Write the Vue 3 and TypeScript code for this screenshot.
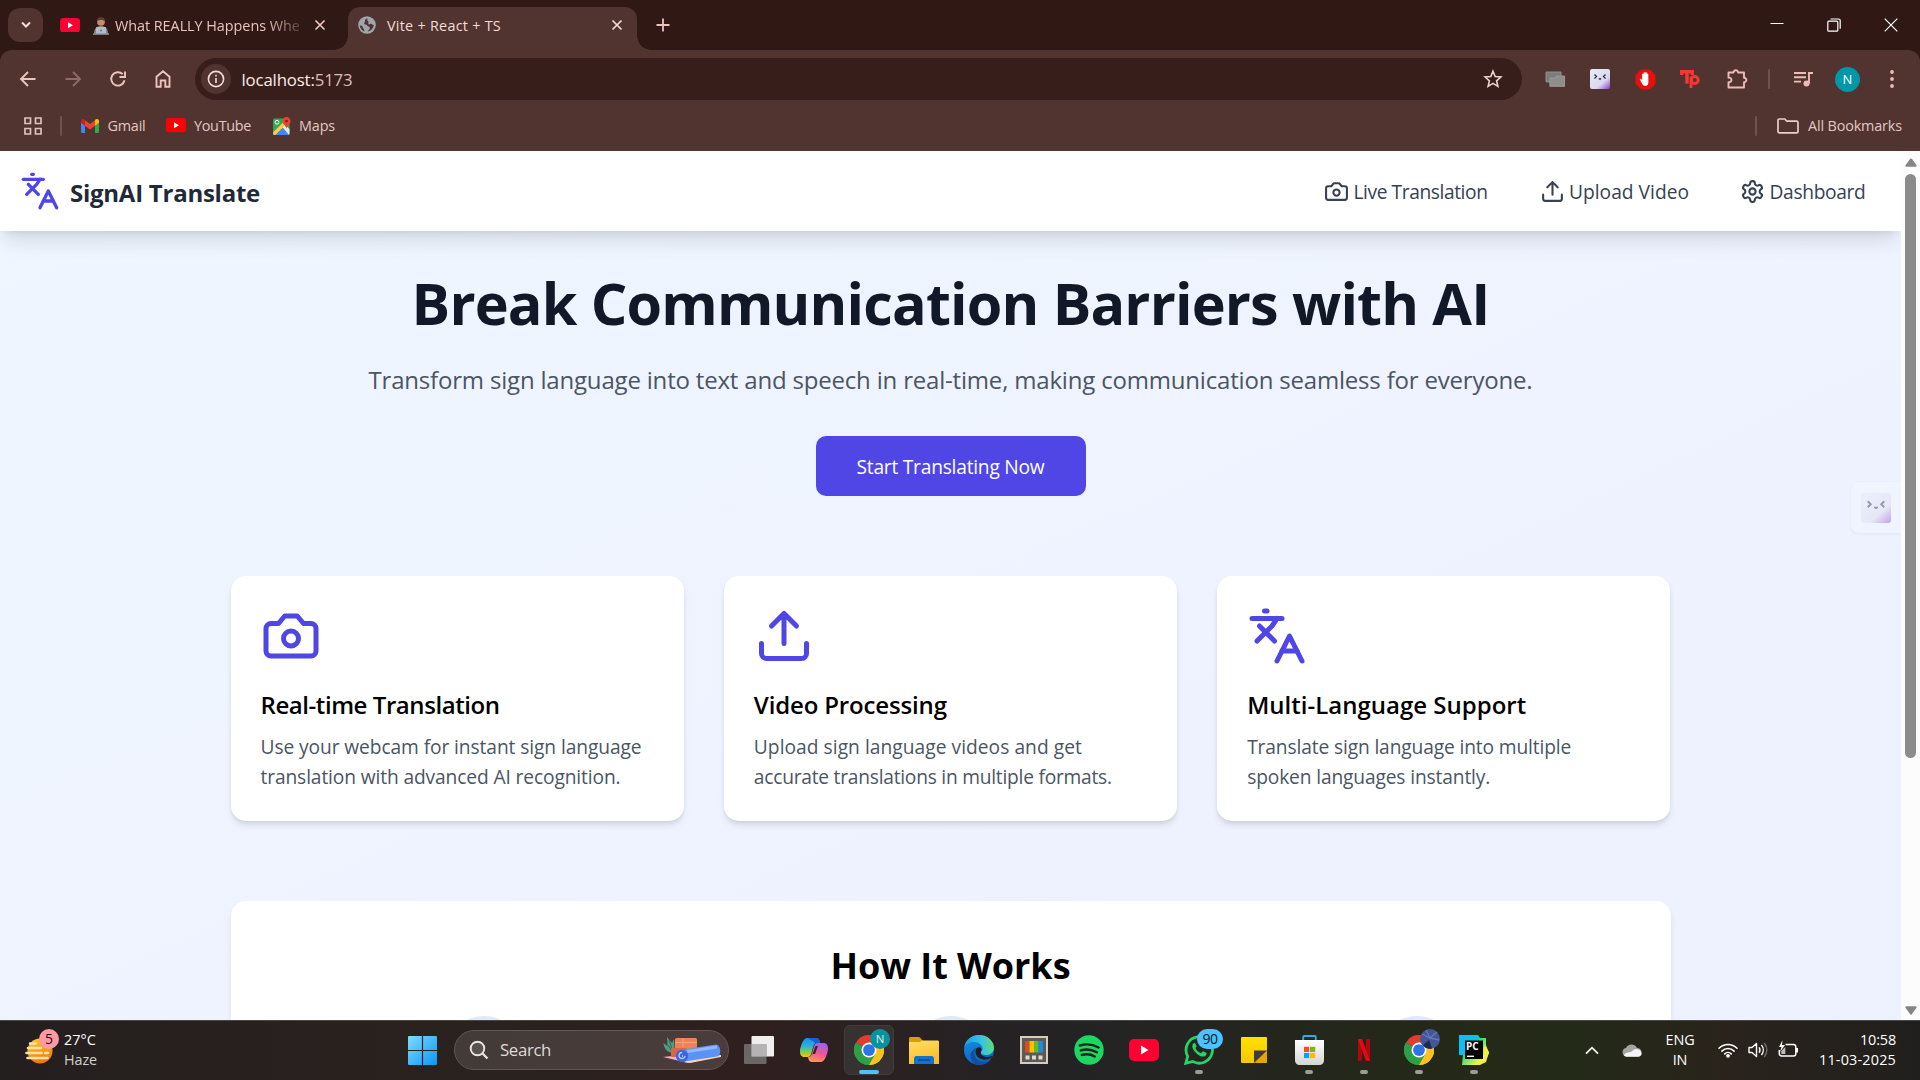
<script setup lang="ts">
interface NavLink { label: string; icon: string; cls: string }
interface Line { text: string; ls: number }
interface Feature { title: Line; icon: string; lines: Line[] }

const navLinks: NavLink[] = [
  { label: 'Live Translation', icon: '#i-camera', cls: 'nav-live' },
  { label: 'Upload Video', icon: '#i-upload', cls: 'nav-upload' },
  { label: 'Dashboard', icon: '#i-gear', cls: 'nav-dash' },
]

const features: Feature[] = [
  {
    title: { text: 'Real-time Translation', ls: -0.434 },
    icon: '#i-camera',
    lines: [
      { text: 'Use your webcam for instant sign language', ls: -0.092 },
      { text: 'translation with advanced AI recognition.', ls: -0.123 },
    ],
  },
  {
    title: { text: 'Video Processing', ls: -0.151 },
    icon: '#i-upload',
    lines: [
      { text: 'Upload sign language videos and get', ls: 0.036 },
      { text: 'accurate translations in multiple formats.', ls: -0.24 },
    ],
  },
  {
    title: { text: 'Multi-Language Support', ls: 0.008 },
    icon: '#i-lang',
    lines: [
      { text: 'Translate sign language into multiple', ls: -0.133 },
      { text: 'spoken languages instantly.', ls: -0.142 },
    ],
  },
]
</script>

<template>
  <div class="screen">
    <svg class="defs" width="0" height="0" aria-hidden="true">
      <defs>
        <linearGradient id="gWin" x1="0" y1="0" x2="1" y2="1"><stop offset="0" stop-color="#7fdcff" /><stop offset="1" stop-color="#0a95f5" /></linearGradient>
        <linearGradient id="gFace" x1="0.2" y1="0.1" x2="1" y2="1"><stop offset="0" stop-color="#e4e8f4" /><stop offset="0.6" stop-color="#dcd8ef" /><stop offset="1" stop-color="#8a3fd0" /></linearGradient>
        <linearGradient id="gSun" x1="0" y1="0" x2="0.3" y2="1"><stop offset="0" stop-color="#ffd21c" /><stop offset="1" stop-color="#f07a10" /></linearGradient>
        <linearGradient id="gCopA" x1="0" y1="0" x2="0" y2="1"><stop offset="0" stop-color="#1c8bf0" /><stop offset="0.45" stop-color="#2bb5d6" /><stop offset="0.7" stop-color="#7ccb4a" /><stop offset="1" stop-color="#f5c518" /></linearGradient>
        <linearGradient id="gCopB" x1="0.6" y1="0" x2="0.3" y2="1"><stop offset="0" stop-color="#a35cf0" /><stop offset="0.5" stop-color="#f0549a" /><stop offset="1" stop-color="#ff9a4a" /></linearGradient>
        <linearGradient id="gFolder" x1="0" y1="0" x2="0.4" y2="1"><stop offset="0" stop-color="#ffdf6b" /><stop offset="1" stop-color="#fbbf24" /></linearGradient>
        <linearGradient id="gEdge" x1="0" y1="0.4" x2="1" y2="0.3"><stop offset="0" stop-color="#1a9ce0" /><stop offset="0.55" stop-color="#35c1e8" /><stop offset="1" stop-color="#5fe070" /></linearGradient>
        <linearGradient id="gEdge2" x1="0" y1="0" x2="0.4" y2="1"><stop offset="0" stop-color="#1b93e6" /><stop offset="1" stop-color="#0a62c0" /></linearGradient>
        <linearGradient id="gPc" x1="0" y1="0" x2="1" y2="1"><stop offset="0" stop-color="#07c3f2" /><stop offset="0.4" stop-color="#21d789" /><stop offset="0.8" stop-color="#fcf84a" /></linearGradient>
        <linearGradient id="gBag" x1="0" y1="0" x2="0" y2="1"><stop offset="0" stop-color="#ffffff" /><stop offset="1" stop-color="#d5d5d5" /></linearGradient>
        <linearGradient id="gNote" x1="0" y1="0" x2="0" y2="1"><stop offset="0" stop-color="#ffe000" /><stop offset="1" stop-color="#f5c800" /></linearGradient>
      </defs>
      <symbol id="i-camera" viewBox="0 0 24 24"><path d="M14.5 4h-5L7 7H4a2 2 0 0 0-2 2v9a2 2 0 0 0 2 2h16a2 2 0 0 0 2-2V9a2 2 0 0 0-2-2h-3l-2.500-3z" /><circle cx="12" cy="13" r="3" /></symbol>
      <symbol id="i-upload" viewBox="0 0 24 24"><path d="M21 15v4a2 2 0 0 1-2 2H5a2 2 0 0 1-2-2v-4" /><path d="m17 8-5-5-5 5M12 3v12" /></symbol>
      <symbol id="i-lang" viewBox="0 0 24 24"><path d="m5 8 6 6" /><path d="m4 14 6-6 2-3" /><path d="M2 5h12" /><path d="M7 2h1" /><path d="m22 22-5-10-5 10" /><path d="M14 18h6" /></symbol>
      <symbol id="i-gear" viewBox="0 0 24 24"><path d="M12.220 2h-.44a2 2 0 0 0-2 2v.18a2 2 0 0 1-1 1.730l-.43.25a2 2 0 0 1-2 0l-.15-.08a2 2 0 0 0-2.730.73l-.22.38a2 2 0 0 0 .73 2.730l.15.1a2 2 0 0 1 1 1.720v.51a2 2 0 0 1-1 1.740l-.15.09a2 2 0 0 0-.73 2.730l.22.38a2 2 0 0 0 2.730.73l.15-.08a2 2 0 0 1 2 0l.43.25a2 2 0 0 1 1 1.730V20a2 2 0 0 0 2 2h.44a2 2 0 0 0 2-2v-.18a2 2 0 0 1 1-1.730l.43-.25a2 2 0 0 1 2 0l.15.08a2 2 0 0 0 2.730-.73l.22-.39a2 2 0 0 0-.73-2.730l-.15-.08a2 2 0 0 1-1-1.740v-.5a2 2 0 0 1 1-1.740l.15-.09a2 2 0 0 0 .73-2.730l-.22-.38a2 2 0 0 0-2.730-.73l-.15.08a2 2 0 0 1-2 0l-.43-.25a2 2 0 0 1-1-1.730V4a2 2 0 0 0-2-2z" /><circle cx="12" cy="12" r="3" /></symbol>
      <symbol id="i-x" viewBox="0 0 12 12"><path d="M1.500 1.500l9 9M10.500 1.500l-9 9" fill="none" stroke="currentColor" stroke-width="1.700" /></symbol>
      <symbol id="i-yt" viewBox="0 0 30 22"><rect width="30" height="22" rx="5" fill="currentColor" /><path d="M12 6.500v9l7.500-4.500z" fill="#fff" /></symbol>
      <symbol id="i-chrome" viewBox="0 0 48 48">
        <path d="M24 24 3.200 12A24 24 0 0 1 44.800 12z" fill="#e33b2e" />
        <path d="M24 24 44.800 12A24 24 0 0 1 24 48z" fill="#fcc31e" />
        <path d="M24 24v24A24 24 0 0 1 3.200 12z" fill="#2c9f47" />
        <path d="M24 12h20.800A24 24 0 0 1 24 48l10.400-18z" fill="#fcc31e" />
        <path d="M13.600 30 3.200 12A24 24 0 0 0 24 48l10.400-18z" fill="#2c9f47" />
        <circle cx="24" cy="24" r="12" fill="#fff" /><circle cx="24" cy="24" r="9.400" fill="#2f73e8" />
      </symbol>
      <symbol id="i-face" viewBox="0 0 20 20"><rect width="20" height="20" rx="2" fill="url(#gFace)" /><path d="M4.500 5.500 6.500 7.500 4.500 9.500M15.500 5.500 13.500 7.500 15.500 9.500" fill="none" stroke="#20283a" stroke-width="1.200" /><path d="M8.600 9.200h2.800c0 2-2.800 2-2.800 0z" fill="#20283a" /></symbol>
    </svg>

    <!-- Tab strip -->
    <div class="tabs">
      <div class="tab-search"><svg width="10" height="8" viewBox="0 0 10 8"><path d="M1 1.500l4 4 4-4" fill="none" stroke="#f3dcd8" stroke-width="2" /></svg></div>
      <div class="tab tab-idle">
        <svg class="yt" width="20" height="14.500" style="color: #ff0033"><use href="#i-yt" /></svg>
        <svg class="person" width="16" height="19" viewBox="0 0 16 19">
          <path d="M1 18c0-6 3-8 7-8s7 2 7 8z" fill="#7d8791" /><circle cx="8" cy="5.800" r="3.900" fill="#c68c6c" /><path d="M4 5.500C3.500-.5 12.500-.5 12 5.500 11 3.500 5 3.500 4 5.500z" fill="#54413c" /><rect x="3" y="11" width="10" height="7" rx="1" fill="#b4bbc3" /><circle cx="8" cy="14.500" r="1" fill="#68717b" /><rect x="0" y="17.300" width="16" height="1.500" fill="#8d959d" />
        </svg>
        <span class="tab-title idle-title">What REALLY Happens Whe</span>
        <svg class="tab-x" width="12" height="12"><use href="#i-x" /></svg>
      </div>
      <div class="tab tab-active">
        <svg class="globe" width="18" height="18" viewBox="0 0 18 18"><circle cx="9" cy="9" r="8.800" fill="#a0a5ab" /><path d="M9.500 2.500c-2 .2-2.800 1.500-2.400 2.800.4 1-1.200 1-1 2.200.2 1.300 2.400.8 3 2 .6 1.300 2.300.4 2.700 2 .3 1.300-1 2.500-2.300 4.200 3.500-.8 6-3.400 6.300-6.700-1.500.3-1.600-1.200-3-1.200-1.300-.2-.7 1-2 .6-1.400-.5.2-1.600-.3-2.600-.4-1-1.600-.6-1-3.300zM1.800 9.500c.2 2.700 2 5 4.600 5.900C6.800 13 5 12.800 4.600 11 4 9.400 3 9.700 1.800 9.500z" fill="#51332f" /></svg>
        <span class="tab-title active-title">Vite + React + TS</span>
        <svg class="tab-x" width="12" height="12"><use href="#i-x" /></svg>
      </div>
      <svg class="plus" width="14" height="14" viewBox="0 0 14 14"><path d="M7 .5v13M.5 7h13" stroke="#ecc4bd" stroke-width="1.800" /></svg>
      <div class="win-ctl">
        <svg width="14" height="14" viewBox="0 0 14 14"><path d="M.5 5.500h13" stroke="#fff" /></svg>
        <svg width="14" height="14" viewBox="0 0 14 14"><rect x=".8" y="3.200" width="10" height="10" rx="1" fill="none" stroke="#fff" stroke-width="1.200" /><path d="M3.500 1h8a1.700 1.700 0 0 1 1.700 1.700v8" fill="none" stroke="#fff" stroke-width="1.200" /></svg>
        <svg width="14" height="14" viewBox="0 0 14 14"><path d="M.7.7l12.600 12.600M13.300.7.7 13.300" stroke="#fff" stroke-width="1.200" /></svg>
      </div>
    </div>

    <!-- Toolbar and bookmarks -->
    <div class="chrome-body">
      <div class="toolbar">
        <div class="nav-btns">
          <svg width="20" height="20" viewBox="0 0 20 20"><path d="M17.500 10H3.500M10 3 3 10l7 7" /></svg>
          <svg class="dim" width="20" height="20" viewBox="0 0 20 20"><path d="M2.500 10h14M10 3l7 7-7 7" /></svg>
          <svg width="20" height="20" viewBox="0 0 20 20"><path d="M16.500 11.200a6.700 6.700 0 1 1-1.800-6M17 2.500V8h-5.500" /></svg>
          <svg width="20" height="20" viewBox="0 0 20 20"><path d="M3.500 17.700V7.800L10 2.300l6.500 5.500v9.900h-4.200V11.500H7.700v6.200z" /></svg>
        </div>
        <div class="omnibox">
          <div class="site-info"><svg width="18" height="18" viewBox="0 0 18 18"><circle cx="9" cy="9" r="7.600" fill="none" stroke="#f0dcd8" stroke-width="1.600" /><path d="M9 8v5M9 4.800v1.700" stroke="#f0dcd8" stroke-width="1.600" /></svg></div>
          <span class="url">localhost:<span class="port">5173</span></span>
          <svg class="star" width="20" height="20" viewBox="0 0 20 20"><path d="M10 2.200l2.200 5.300 5.700.5-4.300 3.800 1.300 5.600L10 14.400l-4.900 3 1.300-5.600L2.100 8l5.700-.5z" fill="none" stroke="#ecd2cd" stroke-width="1.600" /></svg>
        </div>
        <div class="exts">
          <svg width="20" height="20" viewBox="0 0 20 20"><path d="M1 3h15v4h4v11H4.500v-4.500H1z" fill="#7f7b78" /><path d="M1 3h15v9.500H1z" fill="#7c7c7a" stroke="#8f8f8d" /><path d="M5 9h5l1.500-2H19.500v10H5z" fill="#8e8d8b" stroke="#9b9997" /></svg>
          <svg class="e-face" width="20" height="20"><use href="#i-face" /></svg>
          <svg class="e-stop" width="21" height="21" viewBox="0 0 21 21"><path d="M6.200.5h8.600l5.700 5.700v8.600l-5.700 5.700H6.200L.5 14.800V6.200z" fill="#e80f0f" /><path d="M6.500 13.500 4.900 10.800c-.4-.9.7-1.500 1.300-.8l.9 1.200V5.500c0-1.200 1.500-1.200 1.500 0v4-5.300c0-1.200 1.600-1.200 1.600 0v5-5.400c0-1.200 1.600-1.200 1.600 0v5.700-4.200c0-1.100 1.500-1.100 1.500 0l.1 8c-.2 5-5 5-6.900.2z" fill="#fff" /></svg>
          <svg class="e-tp" width="20" height="20" viewBox="0 0 20 20"><path d="M1.700 6V2.800h10.500V6M7 2.800v12" fill="none" stroke="#fb3434" stroke-width="3.400" /><circle cx="14.700" cy="11" r="3.500" fill="none" stroke="#fb3434" stroke-width="3" /><path d="M11 7.500v11.500" stroke="#fb3434" stroke-width="2.800" /></svg>
          <svg class="e-puz" width="22" height="22" viewBox="0 0 22 22"><path d="M2.500 4.500h5a2.300 2.300 0 1 1 4.600 0H18v5.200a2.300 2.300 0 1 1 0 4.600v5.200H2.500v-5.400a2.300 2.300 0 1 0 0-4.400z" fill="none" stroke="#ecbdb5" stroke-width="1.900" stroke-linejoin="round" /></svg>
          <i class="bar e-bar" />
          <svg class="e-mus" width="20" height="18" viewBox="0 0 20 18"><path d="M1 3h12M1 7.300h12M1 11.600h7M16 13.500V3h4" fill="none" stroke="#ecbdb5" stroke-width="1.900" /><circle cx="13.500" cy="13.600" r="3" fill="#ecbdb5" /></svg>
          <div class="avatar">N</div>
          <svg class="e-dots" width="4" height="18" viewBox="0 0 4 18"><circle cx="2" cy="2" r="1.900" fill="#ecbdb5" /><circle cx="2" cy="9" r="1.900" fill="#ecbdb5" /><circle cx="2" cy="16" r="1.900" fill="#ecbdb5" /></svg>
        </div>
      </div>
      <div class="bookmarks">
        <svg class="apps" width="18" height="18" viewBox="0 0 18 18"><path d="M1 1h5.500v5.500H1zM11.500 1H17v5.500h-5.500zM1 11.500h5.500V17H1zM11.500 11.500H17V17h-5.500z" fill="none" stroke="#ddc3bf" stroke-width="1.700" /></svg>
        <i class="bar" />
        <svg class="gm" width="18" height="14" viewBox="0 0 18 14"><path d="M0 2v10.800c0 .6.500 1.200 1.200 1.200H4V6.500z" fill="#4285f4" /><path d="M18 2v10.800c0 .6-.5 1.200-1.200 1.200H14V6.500z" fill="#34a853" /><path d="M14 1.300v5.400l4-3V2c0-2-2.200-2.600-3.600-1.500z" fill="#fbbc04" /><path d="M4 6.700V1.300l5 3.800 5-3.800v5.400l-5 3.800z" fill="#ea4335" /><path d="M0 2v1.700l4 3V1.300L3.600.5C2.200-.6 0 0 0 2z" fill="#c5221f" /></svg>
        <span class="bm bm-gmail">Gmail</span>
        <svg class="yt" width="20" height="14.500" style="color: #ff0000"><use href="#i-yt" /></svg>
        <span class="bm bm-yt">YouTube</span>
        <svg class="mp" width="18" height="18" viewBox="0 0 18 18"><rect y="1.500" width="16.500" height="16.500" rx="1.500" fill="#34a853" /><path d="M2 18 9 10l7 8z" fill="#4285f4" /><path d="M0 15.500 10.500 5l2 3L2.200 18H1.500C.6 18 0 17.400 0 16.500z" fill="#fbd03c" /><path d="M9.500 10.200 12 8l4.500 4v4.500c0 .6-.2 1-.6 1.300z" fill="#e6e8ea" /><circle cx="4" cy="5.300" r="1.900" fill="none" stroke="#fff" stroke-width="1" /><path d="M13.500 0a4 4 0 0 0-4 4.200c0 3 3.200 4 4 7.200.8-3.200 4-4.200 4-7.200a4 4 0 0 0-4-4.200z" fill="#ea4335" /><circle cx="13.500" cy="4.100" r="1.400" fill="#8c1a12" /></svg>
        <span class="bm bm-maps">Maps</span>
        <i class="bar bar-right" />
        <svg class="fold" width="22" height="16" viewBox="0 0 22 16"><path d="M1 13.500V2.200C1 1.500 1.500 1 2.200 1h5.600l2 2.200h9.600c.9 0 1.600.6 1.600 1.500v8.800c0 .8-.6 1.400-1.400 1.400H2.400C1.600 14.900 1 14.300 1 13.500z" fill="none" stroke="#e6d0cc" stroke-width="1.700" /></svg>
        <span class="bm bm-all">All Bookmarks</span>
      </div>
    </div>

    <!-- Page -->
    <div class="viewport">
      <div class="page">
        <header class="site-header">
          <svg class="stroke logo" width="40" height="40"><use href="#i-lang" /></svg>
          <span class="brand">SignAI Translate</span>
          <nav class="links">
            <a v-for="l in navLinks" :key="l.label" :class="['link', l.cls]">
              <svg class="stroke" width="25" height="25"><use :href="l.icon" /></svg><span>{{ l.label }}</span>
            </a>
          </nav>
        </header>
        <main class="content">
          <section class="hero">
            <h1>Break Communication Barriers with AI</h1>
            <p>Transform sign language into text and speech in real-time, making communication seamless for everyone.</p>
            <button type="button">Start Translating Now</button>
          </section>
          <section class="cards">
            <article v-for="f in features" :key="f.title.text" class="card">
              <svg class="stroke" width="60" height="60"><use :href="f.icon" /></svg>
              <h3 :style="{ letterSpacing: f.title.ls + 'px' }">{{ f.title.text }}</h3>
              <p v-for="l in f.lines" :key="l.text" :style="{ letterSpacing: l.ls + 'px' }">{{ l.text }}</p>
            </article>
          </section>
          <section class="how">
            <h2>How It Works</h2>
            <div class="steps"><div v-for="n in 3" :key="n" class="step"><i /></div></div>
          </section>
        </main>
        <div class="side-widget"><svg width="30" height="30"><use href="#i-face" /></svg></div>
      </div>
      <div class="scrollbar">
        <svg width="12" height="9" viewBox="0 0 12 9"><path d="M5 .9 .5 7.300C.1 8 .5 8.800 1.300 8.800h9.400c.8 0 1.200-.8.8-1.500L7 .9C6.500.2 5.500.2 5 .9z" fill="#858585" /></svg>
        <div class="thumb" />
        <svg class="down" width="12" height="9" viewBox="0 0 12 9"><path d="M5 8.100.5 1.700C.1 1 .5.200 1.300.2h9.400c.8 0 1.200.8.8 1.500L7 8.100c-.5.700-1.500.7-2 0z" fill="#858585" /></svg>
      </div>
    </div>

    <!-- Taskbar -->
    <div class="taskbar">
      <div class="weather">
        <div class="sun">
          <svg width="30" height="28" viewBox="0 0 30 28"><circle cx="15" cy="14" r="12.500" fill="url(#gSun)" /><path d="M5 6.500h6M3 11h13M1.500 16h15M20 16h3M2.500 21h20" stroke="#f7dfb0" stroke-width="2.600" stroke-linecap="round" /></svg>
          <b>5</b>
        </div>
        <div class="wtext"><span class="temp">27°C</span><span class="haze">Haze</span></div>
      </div>
      <svg class="win" width="29" height="29" viewBox="0 0 29 29"><path d="M0 1a1 1 0 0 1 1-1h12.900v13.900H0zM15.100 0H28a1 1 0 0 1 1 1v12.900H15.100zM0 15.100h13.900V29H1a1 1 0 0 1-1-1zM15.100 15.100H29V28a1 1 0 0 1-1 1H15.100z" fill="url(#gWin)" /></svg>
      <div class="search">
        <svg width="20" height="20" viewBox="0 0 20 20"><circle cx="8.500" cy="8.500" r="6.800" fill="rgba(255,255,255,.12)" stroke="#e8e6e5" stroke-width="1.900" /><path d="M13.300 13.300 18.500 18.500" stroke="#e8e6e5" stroke-width="2.300" /></svg>
        <span>Search</span>
        <svg class="art" width="59" height="28" viewBox="0 0 59 28">
          <path d="M10 17C3 16 1 12 .5 7l4 3L4 1l5 6 2-4 1 14z" fill="#4f9c80" /><path d="M5 9l5 8M6 4l4 12" stroke="#2c6f5c" fill="none" />
          <path d="M0 21l46-5 12 4-33 7z" fill="#edb5ba" /><path d="M16 25l42-6v2l-31 6z" fill="#f6d6b5" />
          <rect x="12" y="2" width="22" height="11" rx="1.500" fill="#ec8256" /><rect x="8" y="12" width="16" height="9" rx="1" fill="#d96742" /><path d="M12 6.500h22M20 3v8" stroke="#f5a47e" />
          <path d="M17 14 53 8.500c5 0 6 11 1 12l-36 5.500z" fill="#5b92f5" /><path d="M24 15.500l30-4.500" stroke="#92b8ff" stroke-width="3" /><circle cx="19" cy="20" r="6.200" fill="#3f65e0" /><path d="M22 20a3 3 0 1 1-3-3.500M19 20h1" fill="none" stroke="#b9ccff" stroke-width="1.300" />
        </svg>
      </div>
      <div class="apps-row">
        <div class="slot"><svg width="30" height="28" viewBox="0 0 30 28"><rect x="7.500" y="0" width="22.500" height="20.500" rx="1" fill="#efefef" /><rect x="0" y="8" width="22.500" height="20" rx="1" fill="#777" fill-opacity=".82" /><rect x="7.500" y="8" width="15" height="12.500" fill="#b5b3b3" /></svg></div>
        <div class="slot"><svg width="28" height="26" viewBox="0 0 28 26"><path d="M8 1h8c2 0 3 1 3.600 3l.5 2H17c-2 0-3 1-3.600 3l-2.200 8c-.7 2-1.700 3-3.700 3H4.500C1 20 0 17.500 0 14.500 0 11 2 5.500 3.500 3.500 4.800 1.600 6 1 8 1z" fill="url(#gCopA)" /><path d="M8 1h8c2 0 3 1 3.600 3l.5 2H15c-2-2-5-3.500-7-5z" fill="#1a5fd0" /><path d="M20 25h-8c-2 0-3-1-3.600-3L8 20c2 0 3.200-1 3.800-3L14 9c.7-2 1.700-3 3.700-3h5.800c3.500 0 4.500 2.500 4.500 5.500 0 3.500-2 9-3.500 11-1.300 1.900-2.500 2.500-4.500 2.500z" fill="url(#gCopB)" /><path d="M15.500 9h2.500l-3 8h-2.500z" fill="#352425" /></svg></div>
        <div class="slot active"><svg width="30" height="30"><use href="#i-chrome" /></svg><b class="n-badge">N</b><i class="ind on" /></div>
        <div class="slot"><svg width="30" height="27" viewBox="0 0 30 27"><path d="M0 1.500C0 .6.600 0 1.500 0h8c.8 0 1.500.5 2 1l2 2.500V8H0z" fill="#d99c0b" /><path d="M0 5h11l2-1.500h15.500c.9 0 1.500.6 1.500 1.500v22H0z" fill="url(#gFolder)" /><path d="M5 27v-5.500C5 20 6 19 7.500 19h15c1.500 0 2.500 1 2.500 2.500V27z" fill="#1173cf" /><path d="M9 23h12" stroke="#0a4c96" stroke-width="1.500" /></svg></div>
        <div class="slot"><svg width="30" height="30" viewBox="0 0 30 30"><circle cx="15" cy="15" r="15" fill="url(#gEdge2)" /><path d="M.2 13C1 5 7.500 0 15 0c9 0 15 6.500 15 12.500 0 5-3.800 7.500-7.500 7.500-4 0-5.500-1.500-5.500-2.500s1.500-1.500 1.500-4C18.500 10 14.500 7 10 7 5 7 1.500 9.500.2 13z" fill="url(#gEdge)" /><path d="M10.500 18c0 6 5 9.500 10.500 9 2.500-.3 5-1.500 6.500-3.500-2.500 4-7 6.500-12 6.500-6 0-9-5-9-9 0-4 2.500-7 6-8-1.500 1.500-2 3.500-2 5z" fill="#124f9c" /><path d="M17 13c-2-1.500-4.500-.5-5.300 2-1 3.500 1.500 9 8.300 9.500 4 .2 7-1 8.500-2.500.5-.5-.3-1-1-.7-6 2.200-12.500-.8-10.500-5.300.8-1 .8-2 0-3z" fill="#201d20" /></svg></div>
        <div class="slot"><svg width="28" height="28" viewBox="0 0 28 28"><rect width="28" height="28" fill="#d8cdb8" /><rect x="2" y="2" width="24" height="24" fill="#5c5a59" /><rect x="5" y="5" width="4.600" height="11.500" fill="#e04a1c" /><rect x="9.500" y="5" width="4.600" height="11.500" fill="#f8c200" /><rect x="14" y="5" width="4.600" height="11.500" fill="#63bd2a" /><rect x="18.500" y="5" width="4.600" height="11.500" fill="#1e8be0" /><path d="M5.500 19.500h4v4h-4zM12 19.500h4v4h-4zM18.500 19.500h4v4h-4z" fill="#e0d8c8" /></svg></div>
        <div class="slot"><svg width="30" height="30" viewBox="0 0 30 30"><circle cx="15" cy="15" r="14.700" fill="#1ed760" /><path d="M5.800 10.500c6-1.800 13.500-1 18.800 2M6.800 15.400c5.200-1.500 11.400-.8 16 1.900M7.800 19.900c4.300-1.200 9.200-.7 13 1.600" fill="none" stroke="#1c2420" stroke-width="2.400" stroke-linecap="round" /></svg></div>
        <div class="slot"><svg width="30" height="22" style="color: #ff0033"><use href="#i-yt" /></svg></div>
        <div class="slot"><svg width="30" height="30" viewBox="0 0 30 30"><path d="M1.800 28.300l1.900-7A13.200 13.200 0 1 1 8.700 26.400z" fill="#23271d" stroke="#25d366" stroke-width="2.800" /><path d="M10.800 7.800c-.7-.1-2.300.9-2.500 3-.2 2.800 2.300 6 4.800 8.100 2.400 2 5.600 3.200 7.600 2.300 1.400-.6 2-1.900 1.900-3.200l-3.600-1.700-2 2c-2.500-1-4.600-3-5.600-5.300l1.300-1.800z" fill="#25d366" /></svg><b class="count">90</b><i class="ind" /></div>
        <div class="slot"><svg width="26" height="26" viewBox="0 0 26 26"><rect width="26" height="26" rx="1" fill="url(#gNote)" /><path d="M26 13v12l-1 1H13z" fill="#e8a400" /><path d="M13 13.500h13L13 26z" fill="#403c38" /></svg></div>
        <div class="slot"><svg width="29" height="30" viewBox="0 0 29 30"><path d="M8.200 6V2c0-.6.400-1 1-1h10.600c.6 0 1 .4 1 1v4" fill="none" stroke="#27b0e6" stroke-width="1.800" /><path d="M0 5h29v20.500c0 2.500-2 4.500-4.500 4.500h-20C2 30 0 28 0 25.500z" fill="url(#gBag)" /><path d="M9 11.800h5.200V17H9z" fill="#f25022" /><path d="M15 11.800h5.200V17H15z" fill="#7fba00" /><path d="M9 17.900h5.200v5.200H9z" fill="#00a4ef" /><path d="M15 17.900h5.200v5.200H15z" fill="#ffb900" /></svg><i class="ind" /></div>
        <div class="slot"><svg width="12" height="22" viewBox="0 0 12 22"><path d="M0 0h4v21.500L0 22zM8 0h4v22l-4-.5z" fill="#b1060f" /><path d="M0 0h4l8 22-4.200-.5z" fill="#e50914" /></svg><i class="ind" /></div>
        <div class="slot"><svg width="30" height="30"><use href="#i-chrome" /></svg>
          <svg class="photo" width="20" height="20" viewBox="0 0 20 20"><circle cx="10" cy="10" r="10" fill="#41579a" /><path d="M2 5c3 1 5 3 8 4l7-6M10 9l9 2M6 1l4 8" stroke="#6579b8" stroke-width="1.300" fill="none" /><path d="M3 16l6-5 3 8.500c-4 1-7-1-9-3.500z" fill="#1f2a4c" /></svg><i class="ind" /></div>
        <div class="slot"><svg width="30" height="30" viewBox="0 0 30 30"><path d="M0 0h19l2 3h6v7l3 8-4 9-9 3H3L4 20H0z" fill="url(#gPc)" /><path d="M0 0h19l1 6H6v14H0z" fill="#10bdf2" /><path d="M25 10l5 7-3 10-6 3h-8l12-6z" fill="#f5ee3c" /><rect x="6" y="5.500" width="18" height="18.500" fill="#000" /><path d="M8 21.300h7" stroke="#fff" stroke-width="1.400" /></svg><b class="pc">PC</b><i class="ind" /></div>
      </div>
      <div class="tray">
        <svg class="chev" width="14" height="9" viewBox="0 0 14 9"><path d="M1 7.700 7 1.700l6 6" fill="none" stroke="#f2f2f2" stroke-width="1.800" /></svg>
        <svg class="cloud" width="20" height="13" viewBox="0 0 20 13"><path d="M4.500 12.500A4.300 4.300 0 0 1 4 4a6 6 0 0 1 11 0 4.300 4.300 0 0 1 1 8.500z" fill="#a5a5a2" /><path d="M2 11.500C3 8 7 8.500 9 8l3-2.500c3-1.500 7 0 7.600 3.500.3 2-1 3.700-3.600 3.700H4.500c-1 0-2-.5-2.500-1.200z" fill="#f4f4f4" /></svg>
        <div class="lang"><span>ENG</span><span>IN</span></div>
        <svg class="wifi" width="20" height="16" viewBox="0 0 20 16"><path d="M1 6.200a12.700 12.700 0 0 1 18 0M3.900 9.100a8.600 8.600 0 0 1 12.200 0M6.700 11.900a4.700 4.700 0 0 1 6.600 0" fill="none" stroke="#fff" stroke-width="1.500" stroke-linecap="round" /><circle cx="10" cy="13.800" r="1.900" fill="#fff" /></svg>
        <svg class="vol" width="21" height="18" viewBox="0 0 21 18"><path d="M1 6.500h3l4.500-4v13l-4.500-4H1z" fill="none" stroke="#fff" stroke-width="1.400" stroke-linejoin="round" /><path d="M11 6.300a4.500 4.500 0 0 1 0 5.400M13.500 4a8 8 0 0 1 0 10" fill="none" stroke="#fff" stroke-width="1.400" /><path d="M16.300 2a11 11 0 0 1 0 14" fill="none" stroke="#6e6c69" stroke-width="1.400" /></svg>
        <svg class="bat" width="21" height="18" viewBox="0 0 21 18"><path d="M7.500 4.500h8c1.300 0 2.300 1 2.300 2.300v6.900c0 1.300-1 2.300-2.300 2.300H3.600c-1.300 0-2.300-1-2.300-2.300V10" fill="none" stroke="#fff" stroke-width="1.500" /><path d="M19 8v4.500" stroke="#fff" stroke-width="2" /><path d="M4.500.3 1 7h2.500L2 12l5-7H4z" fill="#fff" /><path d="M3.300 14V11l4-4v7z" fill="#bdbcba" /></svg>
        <div class="clock"><span class="time">10:58</span><span class="date">11-03-2025</span></div>
      </div>
    </div>
  </div>
</template>

<style>
html, body { margin: 0; overflow: hidden; }
</style>

<style scoped>
.screen { width: 1920px; height: 1080px; display: flex; flex-direction: column; overflow: hidden; position: relative; font-family: 'Open Sans', 'Noto Sans', sans-serif; white-space: nowrap; background: #301914; }
.screen svg, .screen i { flex: none; display: block; }
.defs { position: absolute; }

/* tab strip */
.tabs { height: 50px; flex: none; display: flex; align-items: center; background: #301914; }
.tab-search { width: 35px; height: 34px; margin-left: 8px; border-radius: 12px; background: #51332f; display: flex; align-items: center; justify-content: center; }
.tab { display: flex; align-items: center; box-sizing: border-box; color: #f3dcd8; }
.tab-idle { width: 305px; padding-left: 17px; color: #ecc4bd; }
.person { margin: 1px 0 0 13px; }
.tab-title { font-size: 14.400px; line-height: 20px; padding-top: 1px; }
.idle-title { width: 184px; margin-left: 6px; letter-spacing: -.04px; -webkit-mask-image: linear-gradient(90deg, #000 82%, transparent 106%); mask-image: linear-gradient(90deg, #000 82%, transparent 106%); }
.tab-idle .tab-x { margin-left: 15px; }
.tab-active { width: 289px; height: 43px; align-self: flex-end; background: #51332f; border-radius: 12px 12px 0 0; padding-left: 10px; padding-bottom: 7px; position: relative; }
.tab-active::before, .tab-active::after { content: ''; position: absolute; bottom: 0; width: 14px; height: 14px; }
.tab-active::before { left: -14px; background: radial-gradient(circle at 0 0, transparent 13.5px, #51332f 14px); }
.tab-active::after { right: -14px; background: radial-gradient(circle at 100% 0, transparent 13.5px, #51332f 14px); }
.active-title { margin-left: 11px; letter-spacing: .256px; width: 224px; }
.tab-x { color: inherit; }
.plus { margin-left: 19px; }
.win-ctl { margin-left: auto; display: flex; gap: 43px; padding-right: 22px; }

/* toolbar */
.chrome-body { height: 101px; flex: none; background: #51332f; border-radius: 12px 12px 0 0; }
.toolbar { height: 58px; display: flex; align-items: center; }
.nav-btns { display: flex; gap: 25px; padding-left: 17.500px; }
.nav-btns svg { fill: none; stroke: #ecc4bd; stroke-width: 1.900; }
.nav-btns .dim { stroke: #8f6b65; }
.omnibox { width: 1327px; height: 42px; box-sizing: border-box; margin-left: 22.500px; border-radius: 21px; background: #381e1a; display: flex; align-items: center; padding: 0 19px 0 6px; flex: none; }
.site-info { width: 30px; height: 30px; border-radius: 50%; background: #51332f; display: flex; align-items: center; justify-content: center; }
.url { margin-left: 10.500px; padding-top: 1px; font-size: 16.800px; line-height: 24px; letter-spacing: -.15px; color: #fbecea; }
.port { color: #dcbcb6; }
.star { margin-left: auto; }
.exts { display: flex; align-items: center; padding-left: 23px; }
.e-face { margin-left: 25px; }
.e-stop { margin-left: 25px; }
.e-tp { margin-left: 24px; }
.e-puz { margin-left: 26px; }
.exts .e-bar { margin-left: 20px; }
.e-mus { margin-left: 23px; }
.bar { width: 2px; height: 20px; border-radius: 1px; background: #755049; }
.avatar { margin-left: 22px; width: 25px; height: 25px; border-radius: 50%; background: #0097a7; color: #fff; font-size: 13px; line-height: 25px; text-align: center; }
.e-dots { margin-left: 30px; }
.bookmarks { height: 35px; display: flex; align-items: center; box-sizing: border-box; padding-left: 24px; }
.bookmarks .bar { margin: 0 19px 0 18px; }
.bm { font-size: 14.400px; line-height: 20px; color: #e2c8c3; padding-top: 1px; }
.bm-gmail { width: 58.500px; margin-left: 8.500px; letter-spacing: -.21px; }
.bm-yt { width: 79px; margin-left: 8px; letter-spacing: -.3px; }
.bm-maps { margin-left: 8px; letter-spacing: -.15px; }
.bookmarks .bar-right { margin-left: auto; margin-right: 20px; }
.bm-all { margin-left: 9px; width: 112px; letter-spacing: -.147px; }

/* page */
.viewport { height: 869px; flex: none; display: flex; }
.page { width: 1901px; flex: none; position: relative; overflow: hidden; background: linear-gradient(to bottom right, #eff6ff, #eef2ff 75%); display: flex; flex-direction: column; }
.stroke { fill: none; stroke: currentColor; stroke-width: 2; stroke-linecap: round; stroke-linejoin: round; overflow: visible; }
.site-header { height: 80px; flex: none; box-sizing: border-box; padding: 0 20px; display: flex; align-items: center; background: #fff; position: relative; z-index: 1; box-shadow: 0 12.5px 18.750px -3.750px rgba(0, 0, 0, .12), 0 5px 7.500px -5px rgba(0, 0, 0, .1); }
.logo { color: #4f46e5; }
.brand { margin: 3px 0 0 10px; font-size: 24px; line-height: 35px; font-weight: 700; color: #1f2937; letter-spacing: -.252px; }
.links { margin-left: auto; display: flex; color: #374151; font-size: 19.200px; line-height: 30px; }
.link { display: flex; align-items: center; }
.link span { margin-left: 4.500px; padding-top: 2px; }
.nav-live { width: 215.500px; letter-spacing: -.418px; }
.nav-upload { width: 200.500px; letter-spacing: .013px; }
.nav-dash { width: 141px; letter-spacing: -.337px; }
.content { width: 1440px; margin: 0 auto; padding-top: 40px; display: flex; flex-direction: column; flex: 1; min-height: 0; }
.hero { display: flex; flex-direction: column; align-items: center; }
h1, h2, h3, p { margin: 0; }
h1 { font-size: 57.500px; line-height: 64px; height: 60px; font-weight: 700; letter-spacing: -.82px; color: #111827; }
.hero p { margin-top: 30px; font-size: 24px; line-height: 37px; height: 35px; letter-spacing: -.187px; color: #4b5563; }
button { margin-top: 40px; width: 270px; height: 60px; flex: none; border: 0; border-radius: 10px; background: #4f46e5; color: #fff; font: 500 19.200px/28px 'Open Sans', sans-serif; letter-spacing: -.233px; padding: 2px 0 0; }
.cards { margin-top: 80px; display: flex; gap: 40px; }
.card { flex: 1; box-sizing: border-box; height: 245px; padding: 30px; border-radius: 15px; background: #fff; box-shadow: 0 5px 7.500px -1.250px rgba(0, 0, 0, .1), 0 2.500px 5px -2.500px rgba(0, 0, 0, .1); }
.card svg { color: #4f46e5; }
h3 { margin: 21px 0 10px; font-size: 24px; line-height: 35px; font-weight: 600; color: #000; }
.card p { font-size: 19.200px; line-height: 30px; color: #4b5563; }
.how { margin-top: 80px; height: 300px; flex: none; box-sizing: border-box; padding: 40px; border-radius: 15px 15px 0 0; background: #fff; box-shadow: 0 5px 7.500px -1.250px rgba(0, 0, 0, .1); }
h2 { font-size: 36px; line-height: 49px; height: 45px; text-align: center; font-weight: 700; letter-spacing: -.047px; color: #000; }
.steps { display: flex; gap: 40px; margin-top: 30px; }
.step { flex: 1; display: flex; justify-content: center; }
.step i { width: 80px; height: 80px; border-radius: 50%; background: #e0e7ff; }
.side-widget { position: absolute; right: 0; top: 331px; width: 50px; height: 51px; box-sizing: border-box; padding: 11px 10px; border-radius: 8px 0 0 8px; background: #f0f4ff; box-shadow: 0 1px 3px rgba(60, 70, 120, .07); }
.side-widget svg { opacity: .45; }
.scrollbar { width: 19px; background: #fcfcfc; display: flex; flex-direction: column; align-items: center; padding: 7px 0 5px; box-sizing: border-box; }
.thumb { width: 11px; height: 584px; margin-top: 7px; border-radius: 6px; background: #8b8b8b; }
.scrollbar .down { margin-top: auto; }

/* taskbar */
.taskbar { height: 60px; flex: none; box-sizing: border-box; border-top: 1px solid #4a4745; padding-bottom: 1px; display: flex; align-items: center; background: linear-gradient(90deg, #241f1f 0, #29211e 18%, #29221e 27%, #301f1f 39%, #242224 53%, #242423 60%, #242818 73%, #242a18 82%, #29231c 90%, #211f1d 100%); color: #fff; }
.weather { width: 408px; display: flex; align-items: center; }
.sun { position: relative; margin: 1px 0 0 25px; width: 30px; }
.sun b { position: absolute; left: 14px; top: -8px; width: 20px; height: 20px; border-radius: 50%; background: #ff99a4; color: #1c1010; font: 400 14px/20px 'Open Sans', sans-serif; text-align: center; }
.wtext { display: flex; flex-direction: column; margin: 0 0 0 9px; font-size: 14.400px; line-height: 20px; }
.temp { letter-spacing: .08px; }
.haze { color: #d2d0cf; letter-spacing: -.11px; }
.search { width: 275px; height: 40px; box-sizing: border-box; margin-left: 17px; border-radius: 20px; border: 1px solid #615654; background: linear-gradient(90deg, #433b37, #4a3c3b); display: flex; align-items: center; padding-left: 14px; }
.search span { margin-left: 11px; width: 163px; font-size: 16.800px; line-height: 24px; letter-spacing: -.357px; color: #dedad8; }
.search .art { margin-left: 0; }
.apps-row { display: flex; margin-left: 5px; gap: 5px; }
.slot { width: 50px; height: 50px; box-sizing: border-box; border-radius: 6px; display: flex; align-items: center; justify-content: center; position: relative; border: 1px solid transparent; }
.slot.active { background: #383132; border-color: #433c3d; }
.ind { position: absolute; left: 20px; bottom: 0; width: 8px; height: 4px; border-radius: 2px; background: #9b9c94; }
.ind.on { left: 14px; width: 20px; background: #4cc2ff; }
.n-badge { position: absolute; left: 25px; top: 3px; width: 20px; height: 20px; border-radius: 50%; background: #0c929c; color: #d8f2f4; font: 400 11.500px/20px 'Open Sans', sans-serif; text-align: center; }
.count { position: absolute; left: 22px; top: 3px; width: 26px; height: 20px; border-radius: 10px; background: #4cc2ff; color: #0b1a22; font: 400 14px/20px 'Open Sans', sans-serif; text-align: center; letter-spacing: -.5px; }
.photo { position: absolute; left: 25px; top: 3px; }
.pc { position: absolute; left: 16px; top: 14px; color: #fff; font: 700 10px/12px 'Open Sans', sans-serif; letter-spacing: 0; }
.tray { margin-left: auto; display: flex; align-items: center; padding-right: 24px; }
.cloud { margin-left: 23px; }
.lang { width: 30px; margin-left: 23px; display: flex; flex-direction: column; align-items: center; font-size: 14.400px; line-height: 20px; letter-spacing: -.1px; }
.wifi { margin-left: 23px; }
.vol { margin-left: 10px; }
.bat { margin-left: 9px; margin-top: -3px; }
.clock { width: 97px; display: flex; flex-direction: column; align-items: flex-end; font-size: 14.400px; line-height: 20px; }
.time { letter-spacing: -.14px; }
.date { letter-spacing: .19px; }
</style>
